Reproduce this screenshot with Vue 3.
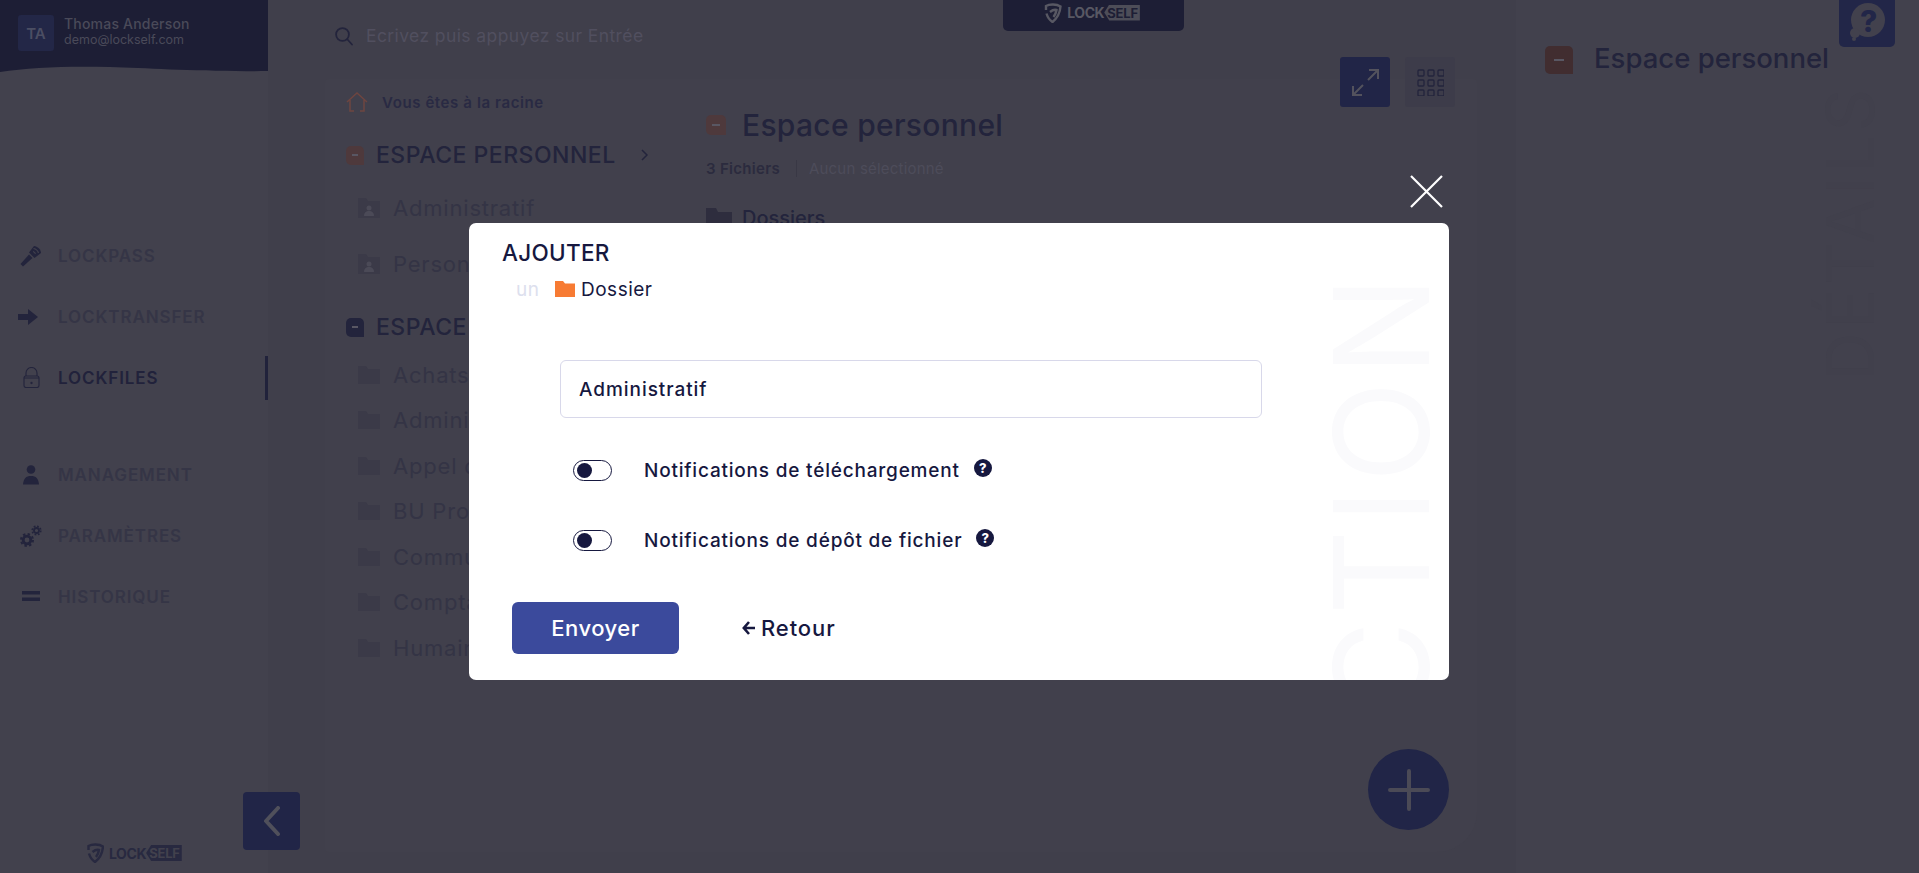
<script setup>
import { ref } from 'vue'

const navTop = [
  { label: 'LOCKPASS', icon: 'torch' },
  { label: 'LOCKTRANSFER', icon: 'arrow' },
  { label: 'LOCKFILES', icon: 'lock', active: true }
]
const navBottom = [
  { label: 'MANAGEMENT', icon: 'person' },
  { label: 'PARAMÈTRES', icon: 'gears' },
  { label: 'HISTORIQUE', icon: 'lines' }
]
const personalFolders = ['Administratif', 'Personnel']
const sharedFolders = ['Achats', 'Administration', "Appel d'offres", 'BU Projets', 'Communication', 'Comptabilité', 'Humain']

const folderName = ref('Administratif')
const notifications = ref([
  { label: 'Notifications de téléchargement', on: false },
  { label: 'Notifications de dépôt de fichier', on: false }
])
</script>

<template>
  <div class="page">
    <aside class="sidebar">
      <div class="user">
        <div class="avatar">TA</div>
        <div class="user-text">
          <div class="user-name">Thomas Anderson</div>
          <div class="user-mail">demo@lockself.com</div>
        </div>
      </div>
      <svg class="wave" viewBox="0 0 268 12" preserveAspectRatio="none">
        <path d="M0 12C30 7 70 6 110 7S200 12 268 11V0H0Z" />
      </svg>

      <nav class="nav">
        <div v-for="group in [navTop, navBottom]" :key="group[0].label" class="nav-group">
          <div v-for="item in group" :key="item.label" class="nav-item" :class="{ active: item.active }">
            <span class="nav-icon">
              <svg v-if="item.icon === 'torch'" width="22" height="22" viewBox="0 0 22 22">
                <path d="M0.5 19 9 9.5l3.5 3.5L3 21.5Z" fill="#23243c" />
                <path d="M9 7.5 14 1c3.500.2 7 3.500 7 7l-6.500 5Z" fill="#23243c" />
                <path d="M13.500 3.500c2.500.5 4.200 2 5 4.500M13 6.500c1.200.3 2 1 2.500 2.200" fill="none" stroke="#42414d" stroke-width="1.200" />
              </svg>
              <svg v-else-if="item.icon === 'arrow'" class="arrow-icon" width="20" height="16" viewBox="0 0 20 16">
                <path d="M0 5h10V0l10 8-10 8v-5H0Z" fill="#23243c" />
              </svg>
              <svg v-else-if="item.icon === 'lock'" width="17" height="21" viewBox="0 0 17 21" fill="none" stroke="#23243c" stroke-width="1.100">
                <rect x="1" y="9" width="15" height="11.500" rx="2" />
                <path d="M3 9V6a5.500 5.500 0 0 1 11 0v3M1 11h15" />
                <circle cx="8.500" cy="16" r=".6" fill="#23243c" />
              </svg>
              <svg v-else-if="item.icon === 'person'" width="16" height="20" viewBox="0 0 16 20">
                <circle cx="8" cy="4.500" r="4.300" fill="#23243c" />
                <path d="M0 19.500c.5-6 3-8.500 8-8.500s7.500 2.500 8 8.500Z" fill="#23243c" />
              </svg>
              <svg v-else-if="item.icon === 'gears'" width="22" height="22" viewBox="0 0 22 22" fill="none" stroke="#23243c">
                <circle cx="7" cy="15" r="3.800" stroke-width="2.800" />
                <circle cx="7" cy="15" r="6" stroke-width="2" stroke-dasharray="2.400 2.300" />
                <circle cx="16.500" cy="5.500" r="2.500" stroke-width="1.800" />
                <circle cx="16.500" cy="5.500" r="4.300" stroke-width="1.600" stroke-dasharray="1.800 1.580" />
              </svg>
              <svg v-else width="18" height="11" viewBox="0 0 18 11">
                <path d="M0 0h18v3.500H0ZM0 6.500h18V10H0Z" fill="#23243c" />
              </svg>
            </span>
            <span class="nav-label">{{ item.label }}</span>
          </div>
        </div>
      </nav>

      <div class="side-logo">
        <svg width="17" height="20" viewBox="0 0 17 20" fill="none" stroke="#282940" stroke-width="2.400">
          <path d="M1.500 7V3C5 1 12 1 16 3.500 15.500 10 13 15 8 19 5 17 3 14 2 10.500" />
          <path d="M5.500 9c2.500-2 5-2.500 6.500-2-.4 3-1.500 5-3 7" />
        </svg>
        <span class="logo-lock">LOCK</span><span class="logo-self">SELF</span>
      </div>
    </aside>

    <main class="center">
      <header class="topbar">
        <div class="search">
          <svg width="18" height="19" viewBox="0 0 18 19" fill="none" stroke="#23243c" stroke-width="1.800">
            <circle cx="7.500" cy="7.500" r="6.400" />
            <path d="m12.500 12.500 4.500 5" stroke-linecap="round" />
          </svg>
          <span class="search-text">Ecrivez puis appuyez sur Entrée</span>
        </div>
        <div class="top-logo">
          <svg width="18" height="20" viewBox="0 0 17 20" fill="none" stroke="#585863" stroke-width="2.400">
            <path d="M1.500 7V3C5 1 12 1 16 3.500 15.500 10 13 15 8 19 5 17 3 14 2 10.500" />
            <path d="M5.500 9c2.500-2 5-2.500 6.500-2-.4 3-1.500 5-3 7" />
          </svg>
          <span class="logo-lock">LOCK</span><span class="logo-self">SELF</span>
        </div>
      </header>

      <section class="panel">
        <div class="tree">
          <div class="crumb">
            <svg width="22" height="20" viewBox="0 0 22 20" fill="none" stroke="#6e4540" stroke-width="1.500">
              <path d="M1 10 11 1l10 9M4 8v11h4M18 8v11h-4" />
            </svg>
            <span>Vous êtes à la racine</span>
          </div>

          <div class="space-title first">
            <span class="badge orange"></span>
            <span class="space-name">ESPACE PERSONNEL</span>
            <svg class="chevron" width="7" height="12" viewBox="0 0 7 12" fill="none" stroke="#23243c" stroke-width="1.500">
              <path d="m1 1 5 5-5 5" />
            </svg>
          </div>
          <div class="rows personal">
            <div v-for="name in personalFolders" :key="name" class="row">
              <svg width="22" height="20" viewBox="0 0 22 20">
                <path d="M0 0h8l2 3h12v17H0Z" fill="#3b3a48" />
                <circle cx="11" cy="10" r="2.500" fill="#4b4a57" />
                <path d="M6 18c0-3.500 2-5 5-5s5 1.500 5 5Z" fill="#4b4a57" />
              </svg>
              <span>{{ name }}</span>
            </div>
          </div>

          <div class="space-title second">
            <span class="badge dark"></span>
            <span class="space-name">ESPACE PARTAGÉ</span>
          </div>
          <div class="rows shared">
            <div v-for="name in sharedFolders" :key="name" class="row">
              <svg width="22" height="18" viewBox="0 0 22 18">
                <path d="M0 0h8l2 3h12v15H0Z" fill="#3b3a48" />
              </svg>
              <span>{{ name }}</span>
            </div>
          </div>
        </div>

        <div class="files">
          <div class="files-title">
            <span class="badge orange big"></span>
            <h1>Espace personnel</h1>
          </div>
          <div class="files-count">
            <strong>3 Fichiers</strong>
            <span class="sep"></span>
            <span class="none">Aucun sélectionné</span>
          </div>
          <div class="files-section">
            <svg width="26" height="20" viewBox="0 0 26 20">
              <path d="M0 0h10l2 4h14v16H0Z" fill="#2e2d3e" />
            </svg>
            <span>Dossiers</span>
          </div>
        </div>

        <div class="view-btns">
          <button class="view-btn expand">
            <svg width="27" height="27" viewBox="0 0 27 27" fill="none" stroke="#53525d" stroke-width="2">
              <path d="M16 11 26 1M17 1h9v9M11 16 1 26M1 17v9h9" />
            </svg>
          </button>
          <button class="view-btn grid">
            <svg width="27" height="27" viewBox="0 0 27 27" fill="none" stroke="#23243c" stroke-width="1.300">
              <template v-for="row in 3" :key="row">
                <rect v-for="col in 3" :key="col" :x="(col - 1) * 10 + 1" :y="(row - 1) * 10 + 1" width="6" height="6" rx="1" />
              </template>
            </svg>
          </button>
        </div>

        <button class="fab">
          <svg width="42" height="42" viewBox="0 0 42 42" stroke="#4b4a56" stroke-width="4" stroke-linecap="round">
            <path d="M21 2v38M2 21h38" />
          </svg>
        </button>
      </section>

      <button class="collapse">
        <svg width="18" height="30" viewBox="0 0 18 30" fill="none" stroke="#50505b" stroke-width="4" stroke-linecap="round" stroke-linejoin="round">
          <path d="M15 2 3 15l12 13" />
        </svg>
      </button>
    </main>

    <aside class="details">
      <div class="details-title">
        <span class="badge orange large"></span>
        <h2>Espace personnel</h2>
      </div>
      <div class="details-ghost">DÉTAILS</div>
      <div class="help">
        <svg width="38" height="40" viewBox="0 0 38 40">
          <circle cx="20" cy="18" r="17" fill="#42414d" />
          <circle cx="7" cy="31" r="5" fill="#42414d" />
          <circle cx="6" cy="37" r="2" fill="#42414d" />
        </svg>
        <span>?</span>
      </div>
    </aside>

    <div class="overlay">
      <button class="close">
        <svg width="33" height="33" viewBox="0 0 33 33" stroke="#fff" stroke-width="2.200">
          <path d="m1 1 31 31M32 1 1 32" />
        </svg>
      </button>

      <div class="modal">
        <div class="ghost">ACTION</div>
        <h3>AJOUTER</h3>
        <div class="subtitle">
          <span class="un">un</span>
          <svg width="20" height="16" viewBox="0 0 20 16">
            <path d="M0 0h8l2 2.500h10V16H0Z" fill="#f77b33" />
          </svg>
          <span>Dossier</span>
        </div>

        <input v-model="folderName" class="name-input" type="text" />

        <div class="toggles">
          <div v-for="item in notifications" :key="item.label" class="toggle-row">
            <span class="toggle"><span class="knob"></span></span>
            <span class="toggle-label">{{ item.label }}</span>
            <span class="tip">?</span>
          </div>
        </div>

        <div class="actions">
          <button class="send">Envoyer</button>
          <button class="back">
            <svg width="13" height="14" viewBox="0 0 13 14" fill="none" stroke="#16183f" stroke-width="2.600">
              <path d="M7 1 1.800 7 7 13M2 7h11" />
            </svg>
            Retour
          </button>
        </div>
      </div>
    </div>
  </div>
</template>

<style scoped>
.page {
  position: relative;
  display: flex;
  width: 1919px;
  height: 873px;
  overflow: hidden;
  background: #42414d;
  color: #23243c;
  font-family: Inter, "Noto Sans", sans-serif;
}

/* sidebar */
.sidebar {
  display: flex;
  flex-direction: column;
  width: 268px;
  flex: none;
}

.user {
  display: flex;
  align-items: flex-start;
  gap: 10px;
  height: 60px;
  padding: 15px 0 0 18px;
  box-sizing: border-box;
  background: #1d1e35;
}

.wave {
  display: block;
  width: 268px;
  height: 12px;
  fill: #1d1e35;
}

.avatar {
  display: flex;
  align-items: center;
  justify-content: center;
  width: 36px;
  height: 36px;
  border-radius: 3px;
  background: #232747;
  color: #4b4e63;
  font-size: 15px;
  font-weight: 600;
}

.user-text {
  color: #4a4a59;
}

.user-name {
  font-size: 14px;
  font-weight: 500;
  line-height: 17px;
  letter-spacing: .2px;
}

.user-mail {
  font-size: 12.5px;
  line-height: 16px;
}

.nav {
  padding-top: 153px;
}

.nav-group + .nav-group {
  margin-top: 36px;
}

.nav-item {
  position: relative;
  display: flex;
  align-items: center;
  height: 61px;
  padding-left: 20px;
}

.nav-icon {
  display: flex;
  justify-content: center;
  width: 22px;
  margin-right: 16px;
}

.arrow-icon {
  margin-left: -7px;
}

.nav-label {
  color: #353546;
  font-size: 17px;
  font-weight: 600;
  letter-spacing: .9px;
}

.nav-item.active .nav-label {
  color: #21223b;
}

.nav-item.active::after {
  content: "";
  position: absolute;
  top: 9px;
  right: 0;
  width: 3px;
  height: 44px;
  background: #21223b;
}

.side-logo {
  display: flex;
  align-items: center;
  margin: auto 0 10px 87px;
}

.logo-lock {
  margin-left: 5px;
  font-size: 14px;
  font-weight: 700;
  letter-spacing: -.4px;
}

.logo-self {
  padding: 0 2px 0 3px;
  font-size: 13px;
  font-weight: 700;
  line-height: 16px;
  letter-spacing: -.2px;
  clip-path: polygon(5px 0, 100% 0, 100% 100%, 5px 100%, 0 50%);
}

.side-logo .logo-lock {
  color: #282940;
}

.side-logo .logo-self {
  background: #282940;
  color: #42414d;
}

/* middle */
.center {
  width: 1248px;
  flex: none;
  padding: 0 39px 0 57px;
  box-sizing: border-box;
  background: #403f4b;
}

.topbar {
  display: flex;
  height: 79px;
}

.search {
  display: flex;
  align-items: flex-start;
  gap: 13px;
  width: 678px;
  padding: 27px 0 0 10px;
  box-sizing: border-box;
}

.search-text {
  margin-top: -1px;
  color: #514f5f;
  font-size: 17.5px;
  line-height: 20px;
  letter-spacing: .4px;
}

.top-logo {
  display: flex;
  align-items: center;
  justify-content: center;
  width: 181px;
  height: 31px;
  padding: 0 3px 6px 0;
  box-sizing: border-box;
  border-radius: 0 0 5px 5px;
  background: #1d1e35;
}

.top-logo .logo-lock {
  color: #585863;
}

.top-logo .logo-self {
  background: #4d4d58;
  color: #1d1e35;
}

.panel {
  position: relative;
  display: flex;
  height: 773px;
  border-radius: 4px 4px 40px 4px;
  background: #41404c;
}

.tree {
  width: 350px;
  flex: none;
}

.crumb {
  display: flex;
  align-items: center;
  gap: 14px;
  height: 46px;
  padding-left: 21px;
  font-size: 15px;
  font-weight: 600;
  letter-spacing: .6px;
  color: #292a43;
}

.space-title {
  display: flex;
  align-items: center;
  gap: 12px;
  height: 30px;
  padding-left: 21px;
}

.space-title.first {
  margin-top: 15px;
}

.space-title.second {
  margin-top: 20px;
}

.space-name {
  font-size: 23px;
  font-weight: 500;
  letter-spacing: .5px;
  color: #23243c;
}

.chevron {
  margin-left: 13px;
}

.badge {
  position: relative;
  display: block;
  width: 18px;
  height: 19px;
  flex: none;
  border-radius: 5px 5px 0 5px;
}

.badge::after {
  content: "";
  position: absolute;
  left: 32%;
  top: 45%;
  width: 36%;
  height: 2px;
  background: #595763;
}

.badge.orange {
  background: #4e393c;
}

.badge.dark {
  background: #23243c;
}

.badge.big {
  width: 20px;
  height: 20px;
}

.badge.large {
  width: 28px;
  height: 28px;
  background: #412d30;
}

.rows.personal {
  margin-top: 10px;
}

.rows.personal .row {
  height: 56px;
}

.rows.shared {
  margin-top: 10px;
}

.row {
  display: flex;
  align-items: center;
  gap: 13px;
  height: 45.5px;
  padding-left: 33px;
  color: #343445;
  font-size: 22px;
  letter-spacing: .8px;
}

.files {
  padding: 36px 0 0 31px;
}

.files-title {
  display: flex;
  align-items: center;
  gap: 16px;
}

.files-title h1 {
  margin: 0;
  color: #23243c;
  font-size: 30px;
  font-weight: 500;
  line-height: 20px;
  letter-spacing: .3px;
}

.files-count {
  display: flex;
  align-items: center;
  margin-top: 24px;
  font-size: 15px;
}

.files-count strong {
  color: #2b2b3e;
  font-weight: 600;
  letter-spacing: .3px;
}

.sep {
  width: 1px;
  height: 17px;
  margin: 0 12px 0 16px;
  background: #393845;
}

.none {
  color: #4d4c5a;
  letter-spacing: .2px;
}

.files-section {
  display: flex;
  align-items: center;
  gap: 10px;
  margin-top: 28px;
  color: #23243c;
  font-size: 20px;
  font-weight: 500;
}

.view-btns {
  position: absolute;
  top: -22px;
  right: 22px;
  display: flex;
  gap: 15px;
}

.view-btn {
  display: flex;
  align-items: center;
  justify-content: center;
  width: 50px;
  height: 50px;
  padding: 0;
  border: none;
  border-radius: 3px;
}

.view-btn.expand {
  background: #212547;
}

.view-btn.grid {
  background: #3d3c4a;
}

.fab {
  position: absolute;
  right: 28px;
  bottom: 22px;
  display: flex;
  align-items: center;
  justify-content: center;
  width: 81px;
  height: 81px;
  padding: 0;
  border: none;
  border-radius: 50%;
  background: #212547;
}

.collapse {
  position: absolute;
  left: 243px;
  top: 792px;
  display: flex;
  align-items: center;
  justify-content: center;
  width: 57px;
  height: 58px;
  padding: 0;
  border: none;
  border-radius: 4px;
  background: #212547;
}

/* right column */
.details {
  position: relative;
  flex: 1;
  padding: 46px 0 0 29px;
}

.details-title {
  display: flex;
  align-items: flex-start;
  gap: 21px;
}

.details-title h2 {
  margin: 0;
  color: #23243c;
  font-size: 27.5px;
  font-weight: 500;
  line-height: 24px;
}

.details-ghost {
  position: absolute;
  top: 85px;
  left: 303px;
  writing-mode: vertical-rl;
  transform: rotate(180deg);
  color: #41404c;
  font-size: 66px;
  line-height: 62px;
  letter-spacing: 4px;
}

.help {
  position: absolute;
  top: 0;
  left: 323px;
  display: flex;
  justify-content: center;
  width: 56px;
  height: 47px;
  padding-top: 2px;
  box-sizing: border-box;
  border-radius: 0 0 5px 5px;
  background: #222648;
}

.help span {
  position: absolute;
  top: 3px;
  left: 21px;
  color: #222648;
  font-size: 30px;
  font-weight: 800;
  line-height: 36px;
}

/* modal */
.overlay {
  position: absolute;
  inset: 0;
}

.close {
  position: absolute;
  left: 1410px;
  top: 175px;
  padding: 0;
  border: none;
  background: none;
}

.close svg {
  display: block;
}

.modal {
  position: absolute;
  left: 469px;
  top: 223px;
  width: 980px;
  height: 457px;
  overflow: hidden;
  box-sizing: border-box;
  padding: 18px 33px 0;
  border-radius: 7px;
  background: #fff;
  color: #16183f;
}

.ghost {
  position: absolute;
  top: 27px;
  left: 862px;
  writing-mode: vertical-rl;
  transform: rotate(180deg);
  color: #fafafc;
  font-size: 132px;
  line-height: 100px;
  letter-spacing: 6px;
  white-space: nowrap;
  height: 560px;
  text-align: left;
}

.modal h3 {
  position: relative;
  margin: 0;
  font-size: 22.5px;
  font-weight: 500;
  line-height: 24px;
  letter-spacing: .3px;
}

.subtitle {
  position: relative;
  display: flex;
  align-items: center;
  margin: 12px 0 0 14px;
  height: 24px;
  font-size: 19px;
  letter-spacing: .5px;
}

.un {
  width: 39px;
  color: #dde0ee;
}

.subtitle svg {
  margin-right: 6px;
}

.name-input {
  position: relative;
  display: block;
  width: 702px;
  height: 58px;
  margin: 59px 0 0 58px;
  padding: 0 18px;
  box-sizing: border-box;
  border: 1px solid #d8d8ea;
  border-radius: 6px;
  color: #16183f;
  font: 500 19px Inter, "Noto Sans", sans-serif;
  letter-spacing: .95px;
  outline: none;
}

.toggles {
  position: relative;
  margin: 42px 0 0 71px;
}

.toggle-row {
  display: flex;
  align-items: center;
  height: 21px;
}

.toggle-row + .toggle-row {
  margin-top: 49px;
}

.toggle {
  position: relative;
  width: 39px;
  height: 21px;
  margin-right: 32px;
  box-sizing: border-box;
  border: 1px solid #16183f;
  border-radius: 11px;
}

.knob {
  position: absolute;
  left: 3px;
  top: 2px;
  width: 15px;
  height: 15px;
  border-radius: 50%;
  background: #16183f;
}

.toggle-label {
  font-size: 19px;
  font-weight: 500;
  letter-spacing: .8px;
}

.tip {
  display: flex;
  align-items: center;
  justify-content: center;
  width: 18px;
  height: 18px;
  margin: -6px 0 0 14px;
  border-radius: 50%;
  background: #16183f;
  color: #fff;
  font-size: 13px;
  font-weight: 800;
}

.actions {
  position: relative;
  display: flex;
  align-items: center;
  margin: 51px 0 0 10px;
}

.send {
  width: 167px;
  height: 52px;
  padding: 0;
  border: none;
  border-radius: 6px;
  background: #3b4a9c;
  color: #fff;
  font: 500 22px Inter, "Noto Sans", sans-serif;
  letter-spacing: .5px;
}

.back {
  display: flex;
  align-items: center;
  gap: 6px;
  margin-left: 63px;
  padding: 0;
  border: none;
  background: none;
  color: #16183f;
  font: 500 22px Inter, "Noto Sans", sans-serif;
  letter-spacing: .9px;
}
</style>
